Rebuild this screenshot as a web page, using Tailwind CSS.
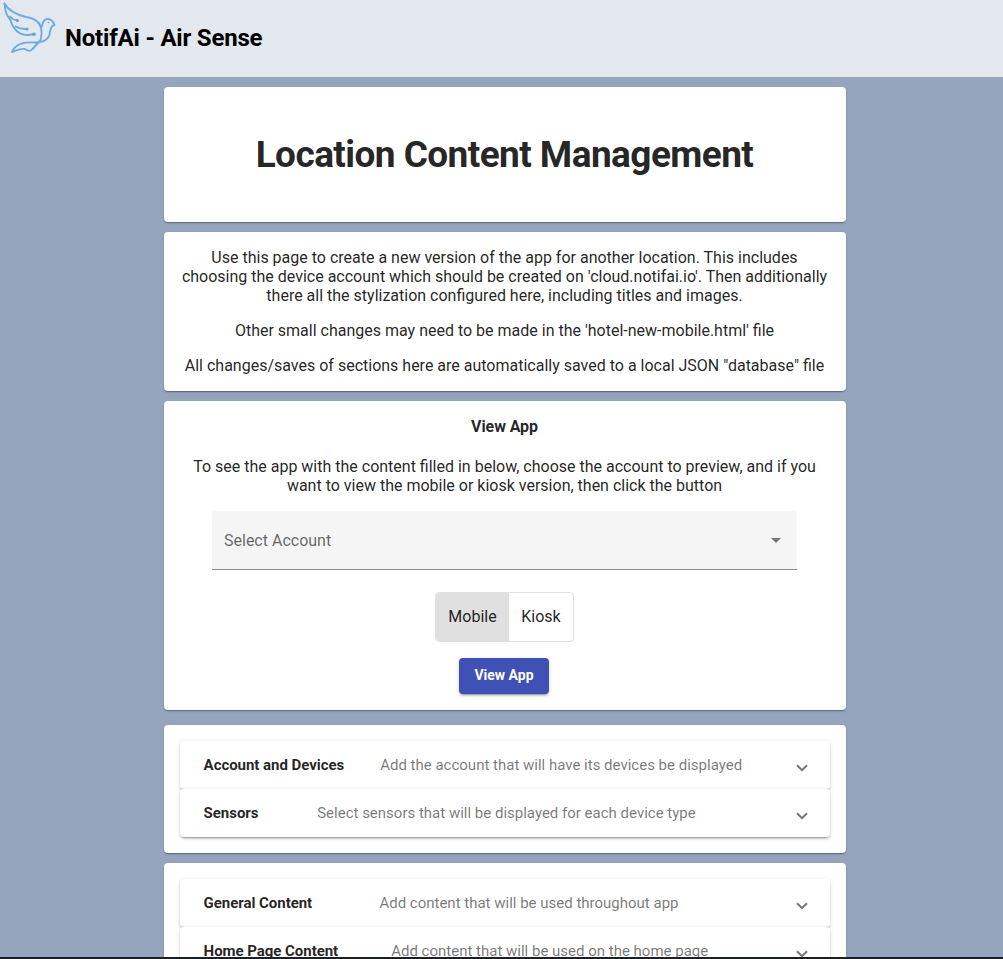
<!DOCTYPE html>
<html lang="en">
<head>
<meta charset="utf-8">
<title>NotifAi - Air Sense</title>
<script src="https://cdn.jsdelivr.net/npm/@tailwindcss/browser@4"></script>
</head>
<body class="h-[959px] overflow-hidden bg-[#95a5be] font-['Roboto',sans-serif] text-base leading-[19px] font-normal text-black/87">
<div class="flex h-[957px] flex-col overflow-hidden">
  <header class="flex h-[77px] shrink-0 bg-[#e3e8ef]">
    <svg class="mt-[1px] ml-[1px] h-[54px] w-[56px] shrink-0" viewBox="1 1 56 54" fill="none" stroke="#68aee4" stroke-width="1.900" stroke-linecap="round" stroke-linejoin="round">
      <path d="M4.500 3.500C8 10 16 14.500 26 17C37 18.500 42 25 41.500 34C41.300 39 40 43 36.500 43.500"/>
      <path d="M4.500 3.500C5 12 7.500 17 10.500 20C13 29 19 34.500 27 35C30 35.300 32 34.500 34 34"/>
      <path d="M10 16.500Q13 20 17.500 20.500M15.500 26.500Q20 29.500 27 29"/>
      <path d="M41.500 27C43 24 42 20 47 19C51 18.500 53 21 54.500 25C52 25.500 50.500 28 50 32C49.500 38 45.500 42 36 42.500C27 42 16 42 12 52C18 49.500 22 48.500 25 49C28 51 30 52 32 49.500L40 41"/>
      <g fill="#5ba5de" stroke="none"><circle cx="17.300" cy="20.500" r="1.600"/><circle cx="27" cy="29" r="1.600"/><circle cx="34" cy="34.200" r="1.800"/><circle cx="48.500" cy="22.500" r=".8"/></g>
    </svg>
    <h1 class="mt-[22px] ml-[8px] text-2xl leading-8 font-bold tracking-[-0.2px] whitespace-nowrap text-black">NotifAi - Air Sense</h1>
  </header>
  <main class="mt-[10px] ml-[164px] flex w-[682px] flex-col gap-[10px] text-center whitespace-nowrap">
    <section class="h-[135px] shrink-0 rounded bg-white pt-[46px] pr-px shadow-[0_2px_1px_-1px_rgba(0,0,0,.2),0_1px_1px_rgba(0,0,0,.14),0_1px_3px_rgba(0,0,0,.12)]">
      <h2 class="text-[37px] leading-[43px] font-bold tracking-[-0.57px]">Location Content Management</h2>
    </section>
    <section class="flex h-[159px] shrink-0 flex-col gap-4 rounded bg-white pt-4 pr-px shadow-[0_2px_1px_-1px_rgba(0,0,0,.2),0_1px_1px_rgba(0,0,0,.14),0_1px_3px_rgba(0,0,0,.12)]">
      <p>Use this page to create a new version of the app for another location. This includes<br>choosing the device account which should be created on 'cloud.notifai.io'. Then additionally<br>there all the stylization configured here, including titles and images.</p>
      <p>Other small changes may need to be made in the 'hotel-new-mobile.html' file</p>
      <p>All changes/saves of sections here are automatically saved to a local JSON "database" file</p>
    </section>
    <section class="flex h-[309px] shrink-0 flex-col items-center rounded bg-white pt-4 pr-px shadow-[0_2px_1px_-1px_rgba(0,0,0,.2),0_1px_1px_rgba(0,0,0,.14),0_1px_3px_rgba(0,0,0,.12)]">
      <h3 class="font-bold tracking-[-0.1px]">View App</h3>
      <p class="mt-[21px]">To see the app with the content filled in below, choose the account to preview, and if you<br>want to view the mobile or kiosk version, then click the button</p>
      <div class="mt-4 flex h-[59px] w-[585px] items-center justify-between rounded-t border-b border-[#8c8c8c] bg-[#f5f5f5] pr-4 pl-3 text-black/60">
        <span>Select Account</span>
        <svg class="h-[5px] w-[10px]" viewBox="0 0 10 5" fill="#757575"><path d="M0 0h10L5 5z"/></svg>
      </div>
      <div class="mt-[22px] flex h-[50px] w-[139px] overflow-hidden rounded border border-[#e0e0e0] leading-[48px]">
        <div class="w-[73px] bg-[#e0e0e0]">Mobile</div><div class="flex-1">Kiosk</div>
      </div>
      <button class="mt-4 mr-px h-9 w-[90px] rounded bg-[#3f51b5] pb-0.5 text-sm leading-[34px] font-bold text-white shadow-[0_3px_1px_-2px_rgba(0,0,0,.2),0_2px_2px_rgba(0,0,0,.14),0_1px_5px_rgba(0,0,0,.12)]">View App</button>
    </section>
    <section class="mt-[5px] h-[128px] shrink-0 rounded bg-white p-4 text-left text-[15px] leading-[48px] shadow-[0_2px_1px_-1px_rgba(0,0,0,.2),0_1px_1px_rgba(0,0,0,.14),0_1px_3px_rgba(0,0,0,.12)]">
      <div class="flex h-12 rounded bg-white pr-[22px] pl-[23.6px] shadow-[0_3px_1px_-2px_rgba(0,0,0,.2),0_2px_2px_rgba(0,0,0,.14),0_1px_5px_rgba(0,0,0,.12)]">
        <b class="w-[176.600px] font-bold tracking-[-0.04px]">Account and Devices</b><span class="text-black/54">Add the account that will have its devices be displayed</span>
        <svg class="mt-[23px] ml-auto h-[8px] w-[12px]" viewBox="0 0 12 8" fill="none" stroke="#757575" stroke-width="2"><path d="M1 1.200 6 6.200 11 1.200"/></svg>
      </div>
      <div class="relative flex h-12 rounded bg-white pr-[22px] pl-[23.6px] shadow-[0_3px_1px_-2px_rgba(0,0,0,.2),0_2px_2px_rgba(0,0,0,.14),0_1px_5px_rgba(0,0,0,.12)]">
        <b class="w-[113.600px] font-bold tracking-[-0.04px]">Sensors</b><span class="text-black/54">Select sensors that will be displayed for each device type</span>
        <svg class="mt-[23px] ml-auto h-[8px] w-[12px]" viewBox="0 0 12 8" fill="none" stroke="#757575" stroke-width="2"><path d="M1 1.200 6 6.200 11 1.200"/></svg>
      </div>
    </section>
    <section class="h-[128px] shrink-0 rounded bg-white p-4 text-left text-[15px] leading-[48px] shadow-[0_2px_1px_-1px_rgba(0,0,0,.2),0_1px_1px_rgba(0,0,0,.14),0_1px_3px_rgba(0,0,0,.12)]">
      <div class="flex h-12 rounded bg-white pr-[22px] pl-[23.6px] shadow-[0_3px_1px_-2px_rgba(0,0,0,.2),0_2px_2px_rgba(0,0,0,.14),0_1px_5px_rgba(0,0,0,.12)]">
        <b class="w-[175.800px] font-bold tracking-[-0.04px]">General Content</b><span class="text-black/54">Add content that will be used throughout app</span>
        <svg class="mt-[23px] ml-auto h-[8px] w-[12px]" viewBox="0 0 12 8" fill="none" stroke="#757575" stroke-width="2"><path d="M1 1.200 6 6.200 11 1.200"/></svg>
      </div>
      <div class="relative flex h-12 rounded bg-white pr-[22px] pl-[23.6px] shadow-[0_3px_1px_-2px_rgba(0,0,0,.2),0_2px_2px_rgba(0,0,0,.14),0_1px_5px_rgba(0,0,0,.12)]">
        <b class="w-[187.600px] font-bold tracking-[-0.04px]">Home Page Content</b><span class="text-black/54">Add content that will be used on the home page</span>
        <svg class="mt-[23px] ml-auto h-[8px] w-[12px]" viewBox="0 0 12 8" fill="none" stroke="#757575" stroke-width="2"><path d="M1 1.200 6 6.200 11 1.200"/></svg>
      </div>
    </section>
  </main>
</div>
<div class="h-[2px] bg-[#1c1f22]"></div>
</body>
</html>
